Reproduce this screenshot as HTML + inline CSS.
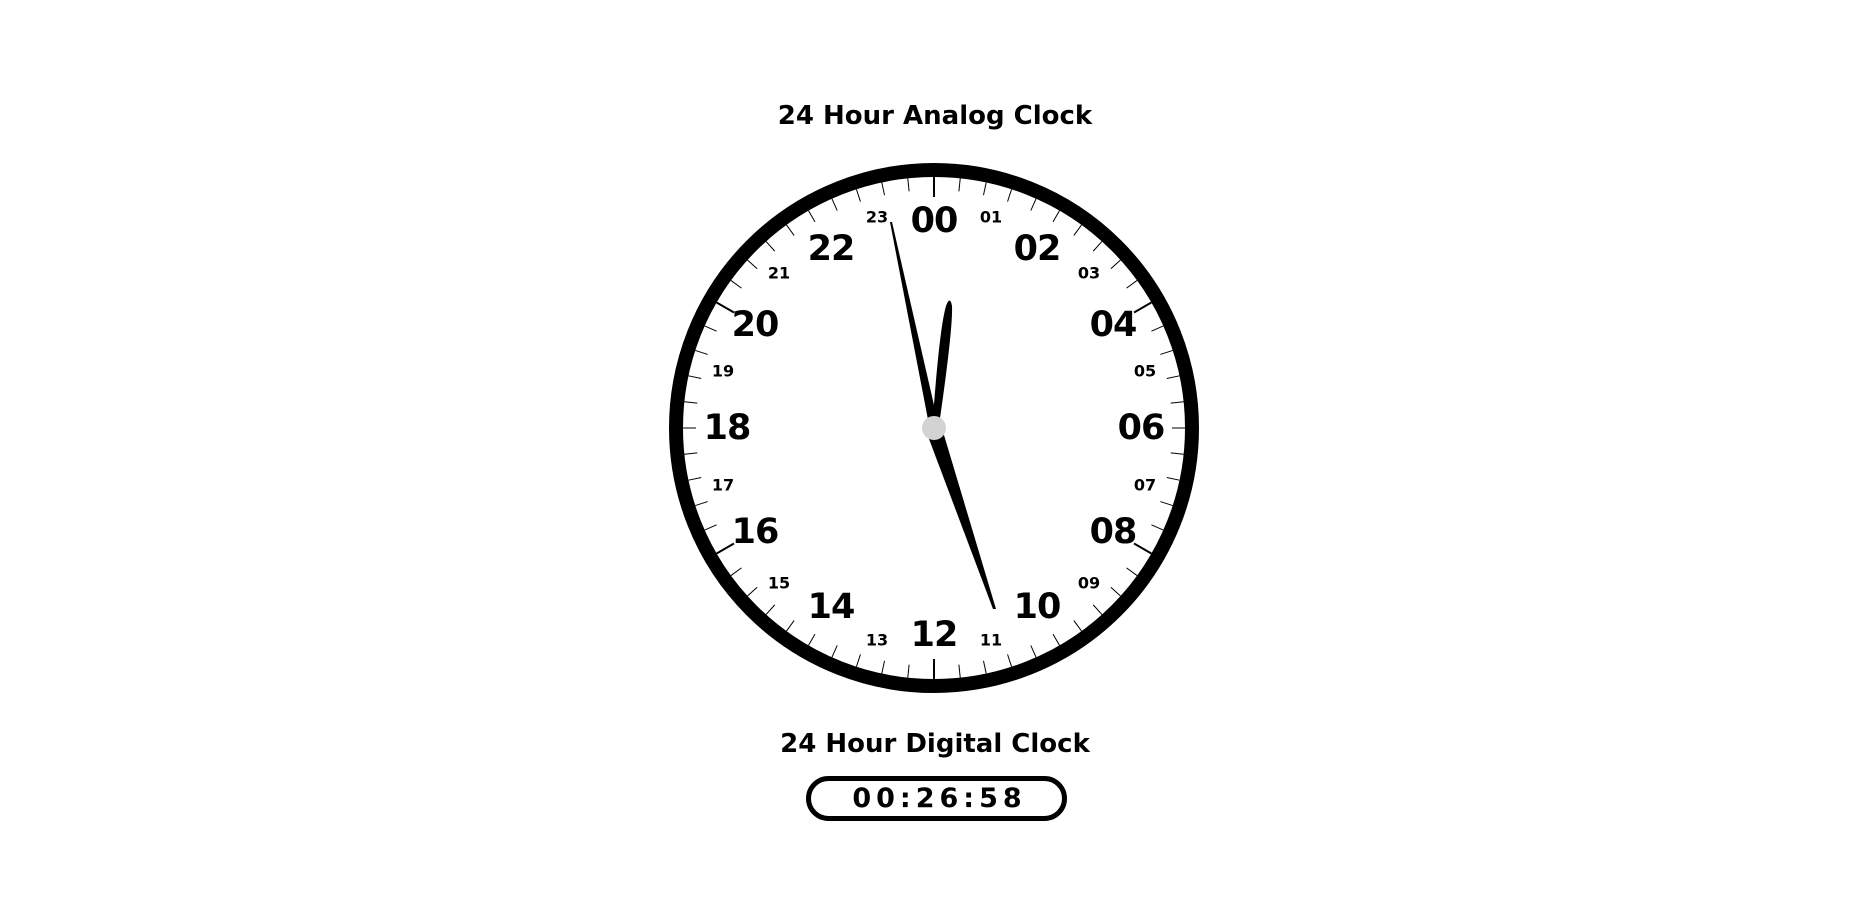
<!DOCTYPE html>
<html><head><meta charset="utf-8"><style>
html,body{margin:0;padding:0;background:#fff;width:1873px;height:919px;overflow:hidden;}
svg{position:absolute;left:0;top:0;}
.t{font-family:"DejaVu Sans","Liberation Sans",sans-serif;font-weight:bold;fill:#000;text-anchor:middle;dominant-baseline:central;}
.big{font-size:35px;letter-spacing:-1px;}
.sm{font-size:16px;}
.h{position:absolute;left:0;width:1870px;text-align:center;font-family:"DejaVu Sans","Liberation Sans",sans-serif;font-weight:bold;font-size:26px;color:#000;}
.box{position:absolute;left:806px;top:776px;width:245px;height:35px;border:5px solid #000;border-radius:24px;text-align:center;font-family:"DejaVu Sans","Liberation Sans",sans-serif;font-weight:bold;font-size:27px;line-height:36px;letter-spacing:5px;padding-left:6px;box-sizing:content-box;}
</style></head><body>
<div class="h" style="top:101px">24 Hour Analog Clock</div>
<div class="h" style="top:729px">24 Hour Digital Clock</div>
<div class="box">00:26:58</div>
<svg width="1873" height="919" viewBox="0 0 1873 919">
<circle cx="934" cy="428" r="258" fill="none" stroke="#000" stroke-width="14"/>
<g id="ticks" stroke="#000"></g>
<text class="t big" x="934" y="221">00</text>
<text class="t big" x="1037" y="249">02</text>
<text class="t big" x="1113" y="325">04</text>
<text class="t big" x="1141" y="428">06</text>
<text class="t big" x="1113" y="532">08</text>
<text class="t big" x="1037" y="607">10</text>
<text class="t big" x="934" y="635">12</text>
<text class="t big" x="831" y="607">14</text>
<text class="t big" x="755" y="532">16</text>
<text class="t big" x="727" y="428">18</text>
<text class="t big" x="755" y="325">20</text>
<text class="t big" x="831" y="249">22</text>
<text class="t sm" x="991" y="217">01</text>
<text class="t sm" x="1089" y="273">03</text>
<text class="t sm" x="1145" y="371">05</text>
<text class="t sm" x="1145" y="485">07</text>
<text class="t sm" x="1089" y="583">09</text>
<text class="t sm" x="991" y="640">11</text>
<text class="t sm" x="877" y="640">13</text>
<text class="t sm" x="779" y="583">15</text>
<text class="t sm" x="723" y="485">17</text>
<text class="t sm" x="723" y="371">19</text>
<text class="t sm" x="779" y="273">21</text>
<text class="t sm" x="877" y="217">23</text>
<!-- second hand -->
<polygon points="930,430 939,427 892,222 890,222" fill="#000"/>
<!-- hour hand -->
<path d="M932,432 Q939,330 946,306 Q950,295 952,306 Q953,330 938,432 Z" fill="#000"/>
<!-- minute hand -->
<polygon points="926,431 941,425 996,609 993,609" fill="#000"/>
<circle cx="934" cy="428" r="12" fill="#d3d3d3"/>
</svg>
<script>
var g=document.getElementById('ticks'),s='';
for(var i=0;i<60;i++){var a=i*6*Math.PI/180,sx=Math.sin(a),cy=Math.cos(a),ro=251,ri=(i%10==0)?231:238;
s+='<line x1="'+(934+ro*sx)+'" y1="'+(428-ro*cy)+'" x2="'+(934+ri*sx)+'" y2="'+(428-ri*cy)+'" stroke-width="'+(i%10==0?2:1)+'"/>';}
g.innerHTML=s;
</script>
</body></html>
